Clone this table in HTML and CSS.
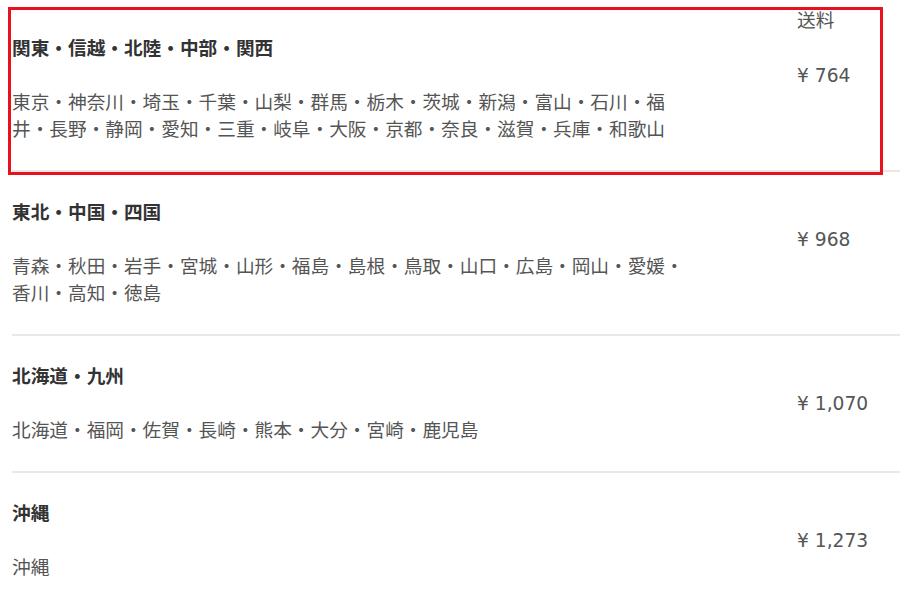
FILE: index.html
```html
<!DOCTYPE html>
<html lang="ja">
<head>
    <meta charset="UTF-8">
    <title>送料一覧</title>
    <link rel="stylesheet" href="styles.css">
</head>
<body>

    <div class="shipping">
        <div class="row">
            <div class="area">
                <p class="area-name">関東・信越・北陸・中部・関西</p>
                <p class="prefs">東京・神奈川・埼玉・千葉・山梨・群馬・栃木・茨城・新潟・富山・石川・福井・長野・静岡・愛知・三重・岐阜・大阪・京都・奈良・滋賀・兵庫・和歌山</p>
            </div>
            <div class="fee">
                <span class="fee-label">送料</span>
                ¥ 764
            </div>
            <!-- highlight frame -->
            <div class="highlight"></div>
        </div>

        <div class="row">
            <div class="area">
                <p class="area-name">東北・中国・四国</p>
                <p class="prefs">青森・秋田・岩手・宮城・山形・福島・島根・鳥取・山口・広島・岡山・愛媛・香川・高知・徳島</p>
            </div>
            <div class="fee">¥ 968</div>
        </div>

        <div class="row">
            <div class="area">
                <p class="area-name">北海道・九州</p>
                <p class="prefs">北海道・福岡・佐賀・長崎・熊本・大分・宮崎・鹿児島</p>
            </div>
            <div class="fee">¥ 1,070</div>
        </div>

        <div class="row">
            <div class="area">
                <p class="area-name">沖縄</p>
                <p class="prefs">沖縄</p>
            </div>
            <div class="fee">¥ 1,273</div>
        </div>
    </div>

</body>
</html>
```

FILE: styles.css
```css
body {
    margin: 0;
    background-color: #fff;
    font-family: "Noto Sans CJK JP", "DejaVu Sans", sans-serif;
    font-size: 18.67px;
    line-height: 27px;
    color: #444;
}
.shipping {
    padding: 8px 0 0 12px;
}
.row {
    position: relative;
    display: grid;
    grid-template-columns: 1fr 103px;
    padding: 25px 0 29px;
    border-bottom: 2px solid #ebe7e7;
}
.area p {
    margin: 0;
}
.area-name {
    font-weight: bold;
    color: #333;
    margin-bottom: 27px !important;
}
.prefs {
    max-width: 680px;
    color: #555;
}
.fee {
    position: relative;
    padding-top: 29px;
    font-family: "DejaVu Sans", sans-serif;
    color: #555;
}
.fee-label {
    position: absolute;
    top: -28px;
    left: 0;
    font-family: "Noto Sans CJK JP", sans-serif;
    color: #555;
}
.highlight {
    position: absolute;
    left: -4px;
    top: -1px;
    width: 869px;
    height: 162px;
    border: 3px solid #e8111d;
}
```
